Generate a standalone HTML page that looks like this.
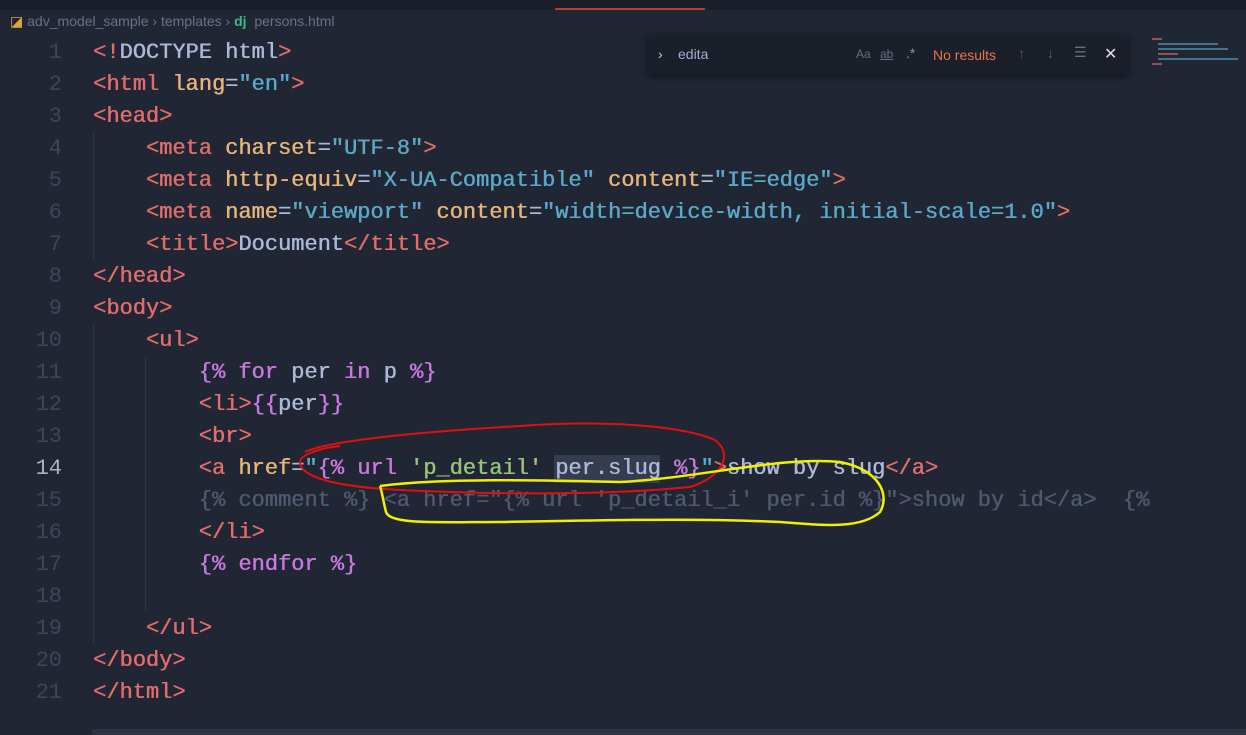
<!DOCTYPE html>
<html><head><meta charset="utf-8"><style>
body{margin:0;width:1246px;height:735px;background:#212634;overflow:hidden;position:relative;font-family:"Liberation Mono",monospace}
.tabs{position:absolute;left:0;top:0;width:1246px;height:10px;background:#1a1e29}
.crumb{position:absolute;left:10px;top:13px;font:14px "Liberation Sans",sans-serif;color:#687186}
.line{position:absolute;left:0;height:32px;line-height:32px;font-size:22px;white-space:pre;color:#abb8d8;text-shadow:0.5px 0 0 currentColor}
.ln{position:absolute;left:0;width:62px;text-align:right;color:#3d4658;text-shadow:none}
.cur .ln{color:#aab2c2}
.code{position:absolute;left:93px}
.t{color:#e06c6c}.a{color:#e5b47a}.s{color:#5aa8c6}.k{color:#c678dd}.g{color:#98c379}.c{color:#4e586e}.p{color:#abb8d8}
.guide{position:absolute;width:1px;background:#2f3545}
.find{position:absolute;left:648px;top:36px;width:480px;height:38px;background:#1b1f2a;box-shadow:0 2px 8px #0008;font:14px "Liberation Sans",sans-serif}
</style></head><body>
<div class="tabs"></div>
<div style="position:absolute;left:555px;top:8px;width:150px;height:2px;background:#c0392b"></div>
<div class="crumb"><span style="color:#d9a83a">◪</span> adv_model_sample › templates › <span style="color:#3fb98a;font-weight:bold">dj</span>&nbsp; persons.html</div>
<div class="guide" style="left:93px;top:132px;height:128px"></div>
<div class="guide" style="left:145px;top:356px;height:256px"></div>
<div class="guide" style="left:93px;top:324px;height:320px"></div>
<div class="line" style="top:37px"><span class="ln">1</span><span class="code"><span class="t">&lt;!</span><span class="p">DOCTYPE html</span><span class="t">&gt;</span></span></div>
<div class="line" style="top:69px"><span class="ln">2</span><span class="code"><span class="t">&lt;html</span> <span class="a">lang</span>=<span class="s">"en"</span><span class="t">&gt;</span></span></div>
<div class="line" style="top:101px"><span class="ln">3</span><span class="code"><span class="t">&lt;head&gt;</span></span></div>
<div class="line" style="top:133px"><span class="ln">4</span><span class="code">    <span class="t">&lt;meta</span> <span class="a">charset</span>=<span class="s">"UTF-8"</span><span class="t">&gt;</span></span></div>
<div class="line" style="top:165px"><span class="ln">5</span><span class="code">    <span class="t">&lt;meta</span> <span class="a">http-equiv</span>=<span class="s">"X-UA-Compatible"</span> <span class="a">content</span>=<span class="s">"IE=edge"</span><span class="t">&gt;</span></span></div>
<div class="line" style="top:197px"><span class="ln">6</span><span class="code">    <span class="t">&lt;meta</span> <span class="a">name</span>=<span class="s">"viewport"</span> <span class="a">content</span>=<span class="s">"width=device-width, initial-scale=1.0"</span><span class="t">&gt;</span></span></div>
<div class="line" style="top:229px"><span class="ln">7</span><span class="code">    <span class="t">&lt;title&gt;</span>Document<span class="t">&lt;/title&gt;</span></span></div>
<div class="line" style="top:261px"><span class="ln">8</span><span class="code"><span class="t">&lt;/head&gt;</span></span></div>
<div class="line" style="top:293px"><span class="ln">9</span><span class="code"><span class="t">&lt;body&gt;</span></span></div>
<div class="line" style="top:325px"><span class="ln">10</span><span class="code">    <span class="t">&lt;ul&gt;</span></span></div>
<div class="line" style="top:357px"><span class="ln">11</span><span class="code">        <span class="k">{%</span> <span class="k">for</span> per <span class="k">in</span> p <span class="k">%}</span></span></div>
<div class="line" style="top:389px"><span class="ln">12</span><span class="code">        <span class="t">&lt;li&gt;</span><span class="k">{{</span>per<span class="k">}}</span></span></div>
<div class="line" style="top:421px"><span class="ln">13</span><span class="code">        <span class="t">&lt;br&gt;</span></span></div>
<div style="position:absolute;left:554px;top:455px;width:106px;height:28px;background:#353c4e"></div>
<div class="line cur" style="top:453px"><span class="ln">14</span><span class="code">        <span class="t">&lt;a</span> <span class="a">href</span>=<span class="s">"</span><span class="k">{%</span> <span class="k">url</span> <span class="g">'p_detail'</span> per.slug <span class="k">%}</span><span class="s">"</span><span class="t">&gt;</span>show by slug<span class="t">&lt;/a&gt;</span></span></div>
<div class="line" style="top:485px"><span class="ln">15</span><span class="code c">        {% comment %} &lt;a href="{% url 'p_detail_i' per.id %}"&gt;show by id&lt;/a&gt;  {%</span></div>
<div class="line" style="top:517px"><span class="ln">16</span><span class="code">        <span class="t">&lt;/li&gt;</span></span></div>
<div class="line" style="top:549px"><span class="ln">17</span><span class="code">        <span class="k">{%</span> <span class="k">endfor</span> <span class="k">%}</span></span></div>
<div class="line" style="top:581px"><span class="ln">18</span></div>
<div class="line" style="top:613px"><span class="ln">19</span><span class="code">    <span class="t">&lt;/ul&gt;</span></span></div>
<div class="line" style="top:645px"><span class="ln">20</span><span class="code"><span class="t">&lt;/body&gt;</span></span></div>
<div class="line" style="top:677px"><span class="ln">21</span><span class="code"><span class="t">&lt;/html&gt;</span></span></div>
<div style="position:absolute;left:92px;top:729px;width:1154px;height:6px;background:#2e3443"></div>
<div class="find">
<span style="position:absolute;left:10px;top:10px;color:#ccc">›</span>
<span style="position:absolute;left:30px;top:10px;color:#9fb0d0">edita</span>
<span style="position:absolute;left:208px;top:11px;color:#666e80;font-size:12px">Aa</span>
<span style="position:absolute;left:232px;top:11px;color:#666e80;font-size:12px;text-decoration:underline">ab</span>
<span style="position:absolute;left:258px;top:9px;color:#8890a0">.*</span>
<span style="position:absolute;left:285px;top:11px;color:#e8744a">No results</span>
<span style="position:absolute;left:370px;top:9px;color:#555c6c">↑</span>
<span style="position:absolute;left:399px;top:9px;color:#555c6c">↓</span>
<span style="position:absolute;left:426px;top:8px;color:#666e80">☰</span>
<span style="position:absolute;left:456px;top:8px;color:#ddd;font-size:16px">✕</span>
</div>
<div style="position:absolute;left:1152px;top:36px;width:80px;height:46px;opacity:.6">
<div style="height:2px;width:10px;background:#e06c6c;margin:2px 0"></div>
<div style="height:2px;width:60px;background:#5aa8c6;margin:3px 6px"></div>
<div style="height:2px;width:70px;background:#5aa8c6;margin:3px 6px"></div>
<div style="height:2px;width:20px;background:#e06c6c;margin:3px 6px"></div>
<div style="height:2px;width:80px;background:#5aa8c6;margin:3px 6px"></div>
<div style="height:2px;width:10px;background:#e06c6c;margin:3px 0"></div>
</div>
<svg style="position:absolute;left:0;top:0" width="1246" height="735">
<path d="M305 452 C330 440 420 432 520 426 C600 420 680 425 715 440 C735 455 720 478 690 487 C600 496 480 494 400 490 C340 487 300 478 300 462 C300 455 320 448 340 446" fill="none" stroke="#e01010" stroke-width="2"/>
<path d="M380 486 C440 478 540 480 620 482 C700 478 780 456 840 462 C880 470 890 495 880 512 C860 530 820 525 780 522 C700 518 620 520 500 522 C440 522 390 525 386 512 C383 500 382 492 380 486" fill="none" stroke="#f0f000" stroke-width="2.5"/>
</svg>
</body></html>
